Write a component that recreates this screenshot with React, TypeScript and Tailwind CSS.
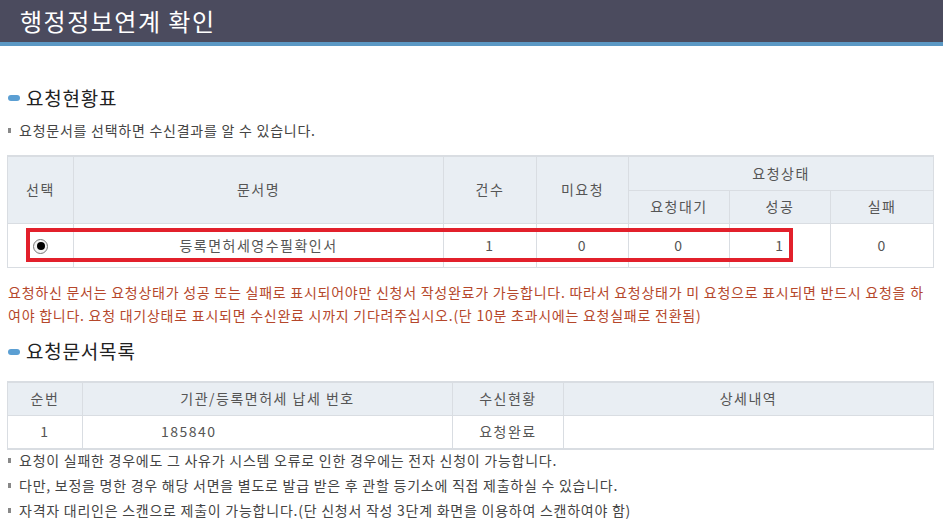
import React from "react";

const font = { fontFamily: '"Noto Sans CJK KR", "Noto Sans", sans-serif' };

function Bullet({ children }: { children: React.ReactNode }) {
  return (
    <div className="flex items-center h-[25px] pl-[8px] text-[14px] text-[#444] tracking-[0.75px] whitespace-nowrap">
      <span className="w-[3px] h-[5px] bg-[#888] mr-[8px]" />
      <span>{children}</span>
    </div>
  );
}

function SectionTitle({ children }: { children: React.ReactNode }) {
  return (
    <div className="flex items-center pl-[8px] h-[30px]">
      <span className="w-[12px] h-[6px] rounded-full bg-[#5b9fd3] mr-[6px]" />
      <span className="text-[19px] text-[#222] tracking-[0.8px]">{children}</span>
    </div>
  );
}

const th = "border border-[#d9dde2] bg-[#e9eef3] text-[#555] font-normal text-[14px] tracking-[1.5px]";
const td = "border border-[#d9dde2] bg-white text-[#555] text-[14px] text-center tracking-[1.5px]";

export default function App() {
  return (
    <div className="w-[943px] h-[532px] bg-white overflow-hidden" style={font}>
      <div className="h-[42px] bg-[#4b4b5e] flex items-center pl-[20px]">
        <span className="text-white text-[24px] tracking-[1.5px]">행정정보연계 확인</span>
      </div>
      <div className="h-[4px] bg-[#5b98c4]" />

      <div className="mt-[37px]">
        <SectionTitle>요청현황표</SectionTitle>
      </div>
      <div className="mt-[5px]">
        <Bullet>요청문서를 선택하면 수신결과를 알 수 있습니다.</Bullet>
      </div>

      <div className="relative ml-[7px] w-[926px] mt-[12px]">
        <table className="w-full border-collapse table-fixed border-t-2 border-t-[#d9dde2]">
          <colgroup>
            <col className="w-[66px]" />
            <col className="w-[370px]" />
            <col className="w-[93px]" />
            <col className="w-[92px]" />
            <col className="w-[101px]" />
            <col className="w-[101px]" />
            <col className="w-[103px]" />
          </colgroup>
          <thead>
            <tr className="h-[34px]">
              <th rowSpan={2} className={th}>선택</th>
              <th rowSpan={2} className={th}>문서명</th>
              <th rowSpan={2} className={th}>건수</th>
              <th rowSpan={2} className={th}>미요청</th>
              <th colSpan={3} className={th}>요청상태</th>
            </tr>
            <tr className="h-[33px]">
              <th className={th}>요청대기</th>
              <th className={th}>성공</th>
              <th className={th}>실패</th>
            </tr>
          </thead>
          <tbody>
            <tr className="h-[44px]">
              <td className={td}>
                <div className="flex justify-center pt-[2px]">
                  <div className="w-[15px] h-[15px] rounded-full border border-[#777] bg-[#f4f4f4] flex items-center justify-center">
                    <div className="w-[8px] h-[8px] rounded-full bg-black" />
                  </div>
                </div>
              </td>
              <td className={td}>등록면허세영수필확인서</td>
              <td className={td}>1</td>
              <td className={td}>0</td>
              <td className={td}>0</td>
              <td className={td}>1</td>
              <td className={td}>0</td>
            </tr>
          </tbody>
        </table>
        <div className="absolute left-[19px] top-[73px] w-[767px] h-[34px] border-[4px] border-[#e2202b] pointer-events-none" />
      </div>

      <div className="mt-[13px] pl-[8px] text-[14px] leading-[23px] text-[#b5472b] tracking-[0.75px] whitespace-nowrap">
        요청하신 문서는 요청상태가 성공 또는 실패로 표시되어야만 신청서 작성완료가 가능합니다. 따라서 요청상태가 미 요청으로 표시되면 반드시 요청을 하
        <br />
        여야 합니다. 요청 대기상태로 표시되면 수신완료 시까지 기다려주십시오.(단 10분 초과시에는 요청실패로 전환됨)
      </div>

      <div className="mt-[10px]">
        <SectionTitle>요청문서목록</SectionTitle>
      </div>

      <div className="ml-[7px] w-[926px] mt-[14px]">
        <table className="w-full border-collapse table-fixed border-t-2 border-t-[#d9dde2] border-b-2 border-b-[#d9dde2]">
          <colgroup>
            <col className="w-[75px]" />
            <col className="w-[370px]" />
            <col className="w-[111px]" />
            <col className="w-[370px]" />
          </colgroup>
          <thead>
            <tr className="h-[34px]">
              <th className={th}>순번</th>
              <th className={th}>기관/등록면허세 납세 번호</th>
              <th className={th}>수신현황</th>
              <th className={th}>상세내역</th>
            </tr>
          </thead>
          <tbody>
            <tr className="h-[33px]">
              <td className={td}>1</td>
              <td className={td + " !text-left pl-[78px]"}>185840</td>
              <td className={td}>요청완료</td>
              <td className={td}></td>
            </tr>
          </tbody>
        </table>
      </div>

      <div className="-mt-[2px]">
        <Bullet>요청이 실패한 경우에도 그 사유가 시스템 오류로 인한 경우에는 전자 신청이 가능합니다.</Bullet>
        <Bullet>다만, 보정을 명한 경우 해당 서면을 별도로 발급 받은 후 관할 등기소에 직접 제출하실 수 있습니다.</Bullet>
        <Bullet>자격자 대리인은 스캔으로 제출이 가능합니다.(단 신청서 작성 3단계 화면을 이용하여 스캔하여야 함)</Bullet>
      </div>
    </div>
  );
}
